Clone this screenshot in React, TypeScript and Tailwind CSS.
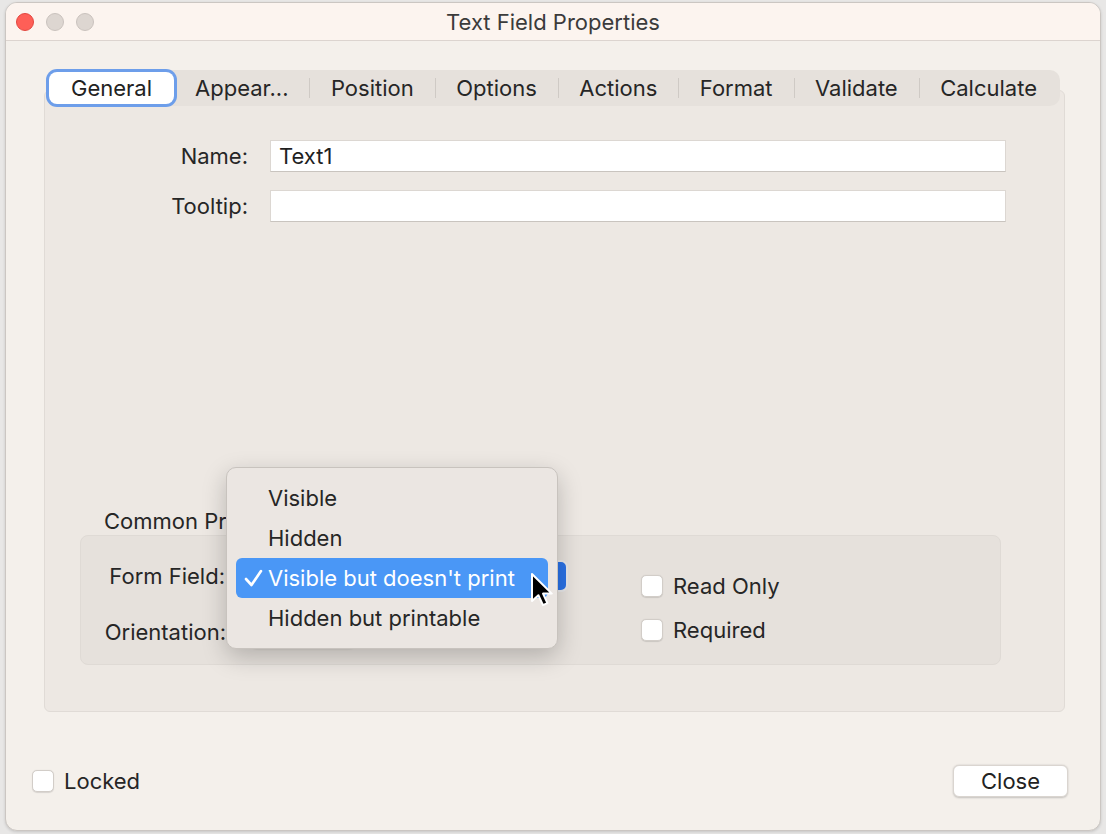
import React from "react";

const tabs = ["Appear...", "Position", "Options", "Actions", "Format", "Validate", "Calculate"];

const menuItems = ["Visible", "Hidden", "Visible but doesn't print", "Hidden but printable"];

function Checkbox({ label }: { label: string }) {
  return (
    <div className="flex items-center gap-[10px]">
      <div className="h-[22px] w-[22px] rounded-[5px] border border-[#d2cdc8] bg-white shadow-[0_0.5px_1px_rgba(0,0,0,0.12)]" />
      <span className="text-[22px] leading-none text-[#262626]">{label}</span>
    </div>
  );
}

function Field({ label, value }: { label: string; value?: string }) {
  return (
    <div className="flex items-center">
      <span className="w-[204px] pr-px text-right text-[22px] text-[#262626]">{label}</span>
      <div className="ml-[21px] flex h-[32px] flex-1 items-center border border-[#dcd7d2] border-b-[#c9c4bf] bg-white px-[8px] text-[22px] text-[#1f1f1f]">
        {value}
      </div>
    </div>
  );
}

function Cursor() {
  return (
    <svg width="26" height="36" viewBox="0 0 13 18" className="absolute left-[529px] top-[572px]">
      <path
        d="M1.5 1 L1.5 14.5 L4.7 11.6 L7 16.6 L9.2 15.6 L7 10.8 L11.4 10.8 Z"
        fill="#000"
        stroke="#fff"
        strokeWidth="1"
        strokeLinejoin="round"
      />
    </svg>
  );
}

export default function App() {
  return (
    <div
      className="relative h-[834px] w-[1106px] overflow-hidden bg-[#e8e7e6] px-[5px] pt-[2px] leading-[26px]"
      style={{ fontFamily: "Inter, 'Liberation Sans', sans-serif" }}
    >
      {/* window */}
      <div className="flex h-[829px] flex-col overflow-hidden rounded-[12px] border border-[#cbc6c2] bg-[#f4f0eb] shadow-[0_1px_3px_rgba(0,0,0,0.15)]">
        {/* title bar */}
        <div className="grid h-[38px] grid-cols-[1fr_auto_1fr] items-center border-b border-[#dcd4cf] bg-[#fcf4ef]">
          <div className="flex items-center gap-[12px] pl-[10px]">
            <div className="h-[18px] w-[18px] rounded-full border border-[#e2463f] bg-[#fe5f57]" />
            <div className="h-[18px] w-[18px] rounded-full border border-[#c9c2bd] bg-[#ddd6d1]" />
            <div className="h-[18px] w-[18px] rounded-full border border-[#c9c2bd] bg-[#ddd6d1]" />
          </div>
          <span className="text-[22px] text-[#3b3b3b]">Text Field Properties</span>
          <div />
        </div>

        {/* body */}
        <div className="flex flex-1 flex-col pl-[38px] pr-[35px] pt-[29px]">
          {/* tab bar */}
          <div className="relative z-10 -mb-[16px] ml-[3px] mr-[5px] flex h-[36px] items-center rounded-[10px] bg-[#e6e1dc] p-[2px]">
            <div className="flex h-[32px] items-center rounded-[8px] bg-white px-[22px] text-[22px] text-[#222] ring-[3px] ring-[#6d9eea]">
              General
            </div>
            {tabs.map((t, i) => (
              <React.Fragment key={t}>
                {i > 0 && <div className="h-[20px] w-px bg-[#cfcac5]" />}
                <div className="px-[21px] text-[22px] text-[#262626]">{t}</div>
              </React.Fragment>
            ))}
          </div>

          {/* panel */}
          <div className="flex h-[622px] flex-col rounded-[6px] border border-[#e0dbd6] bg-[#ede8e3] pb-[46px] pt-[49px]">
            <div className="flex flex-col gap-[18px] pr-[58px]">
              <Field label="Name:" value="Text1" />
              <Field label="Tooltip:" />
            </div>

            <div className="mt-auto">
              <div className="mb-px pl-[59px] text-[22px] text-[#262626]">Common Properties</div>
              <div className="ml-[35px] mr-[63px] flex h-[130px] rounded-[8px] border border-[#dfdad5] bg-[#e6e1dc]">
                <div className="flex w-[560px] flex-col gap-[25px] pt-[24px]">
                  <div className="flex items-center">
                    <span className="w-[144px] text-right text-[22px] text-[#262626]">Form Field:</span>
                    <div className="ml-[11px] h-[32px] w-[332px] rounded-[7px] border-[2px] border-[#e8e8ea] bg-[#2a72e6]" />
                  </div>
                  <div className="flex items-center">
                    <span className="w-[145px] text-right text-[22px] text-[#262626]">Orientation:</span>
                    <div className="ml-[25px] h-[30px] w-[104px] rounded-[6px] bg-white shadow-[0_1px_3px_rgba(0,0,0,0.3)]" />
                  </div>
                </div>
                <div className="flex flex-col gap-[22px] pt-[39px]">
                  <Checkbox label="Read Only" />
                  <Checkbox label="Required" />
                </div>
              </div>
            </div>
          </div>

          {/* footer */}
          <div className="-ml-[12px] -mr-[3px] mt-[53px] flex items-center justify-between">
            <Checkbox label="Locked" />
            <button className="h-[32px] w-[115px] rounded-[6px] border border-[#dad5d0] bg-white text-[22px] text-[#222] shadow-[0_0.5px_2px_rgba(0,0,0,0.2)]">
              Close
            </button>
          </div>
        </div>
      </div>

      {/* open popup menu */}
      <div className="absolute left-[226px] top-[467px] flex w-[332px] flex-col rounded-[10px] border border-[#c8c3be] bg-[#ebe6e2] px-[9px] py-[10px] shadow-[0_8px_24px_rgba(0,0,0,0.22)]">
        {menuItems.map((m, i) => {
          const active = i === 2;
          return (
            <div
              key={m}
              className={
                active
                  ? "flex h-[40px] items-center rounded-[6px] bg-[#4a97f6] pl-[8px] text-[22px] text-white"
                  : "flex h-[40px] items-center pl-[32px] text-[22px] text-[#262626]"
              }
            >
              {active && (
                <svg width="24" height="20" viewBox="0 0 24 20" className="shrink-0">
                  <path d="M2 11 L7.5 17 L17 3" fill="none" stroke="#fff" strokeWidth="2.6" strokeLinecap="round" strokeLinejoin="round" />
                </svg>
              )}
              {m}
            </div>
          );
        })}
      </div>

      <Cursor />
    </div>
  );
}
